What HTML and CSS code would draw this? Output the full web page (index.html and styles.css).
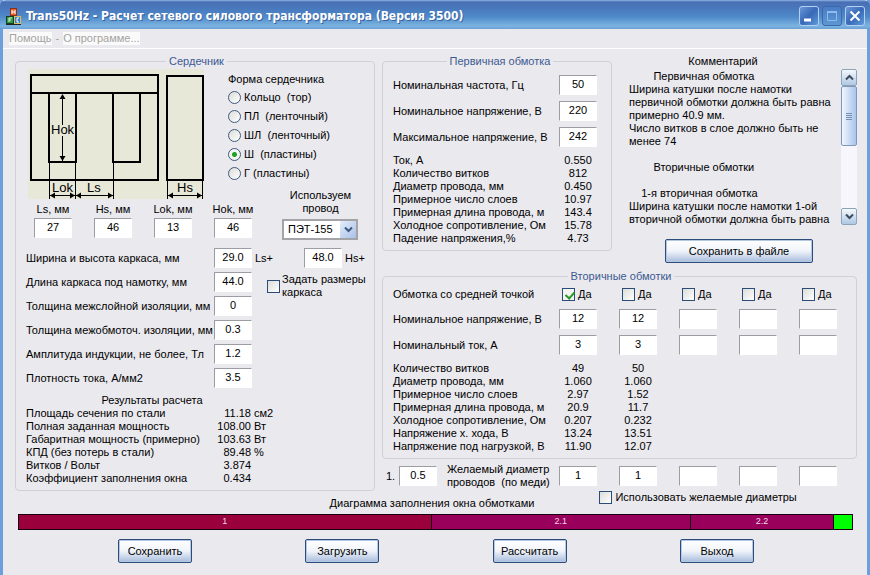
FILE: index.html
```html
<!DOCTYPE html>
<html lang="ru">
<head>
<meta charset="utf-8">
<title>Trans50Hz - Расчет сетевого силового трансформатора (Версия 3500)</title>
<link rel="stylesheet" href="styles.css">
</head>
<body>
<div class="window">
  <header class="titlebar">
    <svg class="app-icon" width="16" height="17" viewBox="0 0 16 17" aria-hidden="true">
      <rect x="4.500" y="0.500" width="6" height="7" fill="#e8602c" stroke="#8c3018"/>
      <path d="M6 2v4M9 2v4M6 4h3" stroke="#fff" fill="none"/>
      <rect x="0.500" y="8.500" width="7" height="7" fill="#2f9a4c" stroke="#14401f"/>
      <path d="M3 14v-4h3M3 12h2" stroke="#d8f5c8" fill="none"/>
      <rect x="8.500" y="8.500" width="6" height="7" fill="#3b7fd0" stroke="#d8c060"/>
      <path d="M13 10h-2v4h2" stroke="#fff" fill="none"/>
      <path d="M0 16.500h15" stroke="#222"/>
    </svg>
    <h1 class="title">Trans50Hz - Расчет сетевого силового трансформатора (Версия 3500)</h1>
    <div class="caption-buttons">
      <button type="button" class="cap" aria-label="Свернуть"><svg width="18" height="18" viewBox="0 0 18 18"><path d="M4 13h7" stroke="#fff" stroke-width="3"/></svg></button>
      <button type="button" class="cap cap-off" aria-label="Развернуть" disabled><svg width="18" height="18" viewBox="0 0 18 18"><path d="M4.500 5v8.500h9V5" fill="none" stroke="#8fbcec"/><path d="M4 5h10" stroke="#8fbcec" stroke-width="2"/></svg></button>
      <button type="button" class="cap" aria-label="Закрыть"><svg width="18" height="18" viewBox="0 0 18 18"><path d="M4.500 4.500l9 9M13.500 4.500l-9 9" stroke="#fff" stroke-width="2"/></svg></button>
    </div>
  </header>
  <nav class="menu"><a href="#help">Помощь</a><span class="dash">-</span><a href="#about">О программе...</a></nav>

  <main>
    <div class="columns">
      <fieldset class="core">
        <legend>Сердечник</legend>
        <div class="core-top">
          <svg class="drawing" width="176" height="130" viewBox="0 0 176 130" role="img" aria-label="Эскиз сердечника">
            <rect width="176" height="130" fill="#e8e8d8"/>
            <g fill="none" stroke="#000" stroke-width="2">
              <rect x="3" y="6" width="127" height="105"/>
              <path d="M3 24h127M21 24v69h27V24M85 24v69h27V24"/>
              <rect x="139" y="7" width="36" height="104"/>
            </g>
            <path d="M21.500 93v37M47.500 93v37M85.500 93v37M139.500 111v19M174.500 111v19M34.500 26v30M34.500 67v25M22 126.500h63M140 126.500h35" fill="none" stroke="#000"/>
            <path d="M34.500 25l3 5h-6zM34.500 92l3-5h-6zM22 126.500l5-3v6zM47 126.500l-5-3v6zM48 126.500l5-3v6zM85 126.500l-5-3v6zM140 126.500l5-3v6zM174 126.500l-5-3v6z"/>
            <text x="23" y="65">Hok</text><text x="24" y="123">Lok</text><text x="59" y="123">Ls</text><text x="149" y="123">Hs</text>
          </svg>
          <div class="shapes" role="radiogroup" aria-labelledby="shape-title">
            <div id="shape-title" class="shape-title">Форма сердечника</div>
            <label><input type="radio" name="shape">Кольцо&nbsp; (тор)</label>
            <label><input type="radio" name="shape">ПЛ&nbsp; (ленточный)</label>
            <label><input type="radio" name="shape">ШЛ&nbsp; (ленточный)</label>
            <label><input type="radio" name="shape" checked>Ш&nbsp; (пластины)</label>
            <label><input type="radio" name="shape">Г (пластины)</label>
          </div>
          <div class="dims">
            <label>Ls, мм<input type="text" value="27"></label>
            <label>Hs, мм<input type="text" value="46"></label>
            <label>Lok, мм<input type="text" value="13"></label>
            <label>Hok, мм<input type="text" value="46"></label>
          </div>
          <div class="wire">
            <label for="wire">Используем<br>провод</label>
            <div class="select">
              <select id="wire"><option>ПЭТ-155</option></select>
              <span class="drop"><svg width="9" height="7" viewBox="0 0 9 7"><path d="M1 1.500l3.500 3.500L8 1.500" fill="none" stroke="#3c5a80" stroke-width="2"/></svg></span>
            </div>
          </div>
        </div>
        <div class="params">
          <label for="fw">Ширина и высота каркаса, мм</label><input id="fw" type="text" value="29.0">
          <div class="frame-height"><span>Ls+</span><input id="fh" type="text" value="48.0"><label for="fh">Hs+</label></div>
          <label for="fl">Длина каркаса под намотку, мм</label><input id="fl" type="text" value="44.0">
          <label class="frame-check"><input type="checkbox"><span>Задать размеры<br>каркаса</span></label>
          <label for="il">Толщина межслойной изоляции, мм</label><input id="il" type="text" value="0">
          <label for="iw">Толщина межобмоточ. изоляции, мм</label><input id="iw" type="text" value="0.3">
          <label for="ia">Амплитуда индукции, не более, Тл</label><input id="ia" type="text" value="1.2">
          <label for="cd">Плотность тока, А/мм2</label><input id="cd" type="text" value="3.5">
        </div>
        <table class="results">
          <caption>Результаты расчета</caption>
          <tr><th>Площадь сечения по стали</th><td>11.18</td><td>см2</td></tr>
          <tr><th>Полная заданная мощность</th><td>108.00</td><td>Вт</td></tr>
          <tr><th>Габаритная мощность (примерно)</th><td>103.63</td><td>Вт</td></tr>
          <tr><th>КПД (без потерь в стали)</th><td>89.48</td><td>%</td></tr>
          <tr><th>Витков / Вольт</th><td>3.874</td><td></td></tr>
          <tr><th>Коэффициент заполнения окна</th><td>0.434</td><td></td></tr>
        </table>
      </fieldset>

      <div class="right">
        <div class="right-top">
          <fieldset class="primary">
            <legend>Первичная обмотка</legend>
            <table class="winding">
              <tr class="field"><th><label for="pf">Номинальная частота, Гц</label></th><td><input id="pf" type="text" value="50"></td></tr>
              <tr class="field"><th><label for="pn">Номинальное напряжение, В</label></th><td><input id="pn" type="text" value="220"></td></tr>
              <tr class="field"><th><label for="pm">Максимальное напряжение, В</label></th><td><input id="pm" type="text" value="242"></td></tr>
              <tr class="first"><th>Ток, А</th><td>0.550</td></tr>
              <tr><th>Количество витков</th><td>812</td></tr>
              <tr><th>Диаметр провода, мм</th><td>0.450</td></tr>
              <tr><th>Примерное число слоев</th><td>10.97</td></tr>
              <tr><th>Примерная длина провода, м</th><td>143.4</td></tr>
              <tr><th>Холодное сопротивление, Ом</th><td>15.78</td></tr>
              <tr><th>Падение напряжения,%</th><td>4.73</td></tr>
            </table>
          </fieldset>
          <section class="comment">
            <label for="comment">Комментарий</label>
            <div class="memo">
              <textarea id="comment" readonly wrap="off">        Первичная обмотка
Ширина катушки после намотки
первичной обмотки должна быть равна
примерно 40.9 мм.
Число витков в слое должно быть не
менее 74

        Вторичные обмотки

    1-я вторичная обмотка
Ширина катушки после намотки 1-ой
вторичной обмотки должна быть равна</textarea>
              <div class="scrollbar">
                <button type="button" aria-label="Вверх"><svg width="9" height="7" viewBox="0 0 9 7"><path d="M1 5.500L4.500 2 8 5.500" fill="none" stroke="#3c4c60" stroke-width="2"/></svg></button>
                <div class="track"><div class="thumb"></div></div>
                <button type="button" aria-label="Вниз"><svg width="9" height="7" viewBox="0 0 9 7"><path d="M1 1.500L4.500 5 8 1.500" fill="none" stroke="#3c4c60" stroke-width="2"/></svg></button>
              </div>
            </div>
            <button type="button" class="btn wide">Сохранить в файле</button>
          </section>
        </div>

        <fieldset class="secondary">
          <legend>Вторичные обмотки</legend>
          <table class="winding">
            <tr class="checks"><th>Обмотка со средней точкой</th>
              <td><label><input type="checkbox" checked>Да</label></td><td><label><input type="checkbox">Да</label></td><td><label><input type="checkbox">Да</label></td><td><label><input type="checkbox">Да</label></td><td><label><input type="checkbox">Да</label></td></tr>
            <tr class="field"><th id="sv">Номинальное напряжение, В</th>
              <td><input type="text" aria-labelledby="sv" value="12"></td><td><input type="text" aria-labelledby="sv" value="12"></td><td><input type="text" aria-labelledby="sv"></td><td><input type="text" aria-labelledby="sv"></td><td><input type="text" aria-labelledby="sv"></td></tr>
            <tr class="field"><th id="sc">Номинальный ток, А</th>
              <td><input type="text" aria-labelledby="sc" value="3"></td><td><input type="text" aria-labelledby="sc" value="3"></td><td><input type="text" aria-labelledby="sc"></td><td><input type="text" aria-labelledby="sc"></td><td><input type="text" aria-labelledby="sc"></td></tr>
            <tr class="first"><th>Количество витков</th><td>49</td><td>50</td><td></td><td></td><td></td></tr>
            <tr><th>Диаметр провода, мм</th><td>1.060</td><td>1.060</td><td></td><td></td><td></td></tr>
            <tr><th>Примерное число слоев</th><td>2.97</td><td>1.52</td><td></td><td></td><td></td></tr>
            <tr><th>Примерная длина провода, м</th><td>20.9</td><td>11.7</td><td></td><td></td><td></td></tr>
            <tr><th>Холодное сопротивление, Ом</th><td>0.207</td><td>0.232</td><td></td><td></td><td></td></tr>
            <tr><th>Напряжение х. хода, В</th><td>13.24</td><td>13.51</td><td></td><td></td><td></td></tr>
            <tr><th>Напряжение под нагрузкой, В</th><td>11.90</td><td>12.07</td><td></td><td></td><td></td></tr>
          </table>
        </fieldset>

        <div class="desired">
          <label for="d1">1.</label><input id="d1" type="text" value="0.5">
          <span id="dd" class="desired-title">Желаемый диаметр<br>проводов&nbsp; (по меди)</span>
          <input type="text" aria-labelledby="dd" value="1"><input type="text" aria-labelledby="dd" value="1"><input type="text" aria-labelledby="dd"><input type="text" aria-labelledby="dd"><input type="text" aria-labelledby="dd">
        </div>
      </div>
    </div>

    <div class="fill-head">
      <h2>Диаграмма заполнения окна обмотками</h2>
      <label><input type="checkbox">Использовать желаемые диаметры</label>
    </div>
    <div class="fill">
      <div class="seg one" style="flex-grow:414">1</div>
      <div class="seg two" style="flex-grow:260">2.1</div>
      <div class="seg two" style="flex-grow:143">2.2</div>
      <div class="seg free" style="flex-grow:18"></div>
    </div>
    <div class="actions">
      <button type="button" class="btn">Сохранить</button>
      <button type="button" class="btn">Загрузить</button>
      <button type="button" class="btn">Рассчитать</button>
      <button type="button" class="btn">Выход</button>
    </div>
  </main>
</div>
</body>
</html>
```
FILE: styles.css
```css
* { box-sizing: border-box; }

body {
  margin: 0;
  background: #eae9ee;
  color: #000;
  font: 11px/13px "Liberation Sans", Arial, sans-serif;
}
input, select, textarea, button { font: inherit; color: inherit; margin: 0; }

.window {
  min-height: 100vh;
  border: solid #6c9fdc;
  border-width: 0 3px;
  background: #eae9ee;
}

/* title bar */
.titlebar {
  display: flex;
  align-items: center;
  height: 29px;
  margin: 0 -3px;
  padding: 3px 5px 0 6px;
  gap: 4px;
  border-radius: 6px 6px 0 0;
  background: linear-gradient(#8fb4e4 0, #4a6fb4 2px, #4878bc 8px, #4f8aca 17px, #7db4e0 26px, #6a9fd4 29px);
}
.title {
  flex: 1;
  margin: 0;
  color: #fff;
  font: bold 12px/16px "DejaVu Sans Condensed", "DejaVu Sans", sans-serif;
  text-shadow: 1px 1px #3a62a0;
  white-space: nowrap;
}
.caption-buttons { display: flex; gap: 3px; }
.cap {
  width: 20px;
  height: 20px;
  padding: 0;
  border: 1px solid #b4d0f0;
  border-radius: 3px;
  background: linear-gradient(135deg, #6a98d8, #3868b8 50%, #5c9ad8);
}
.cap-off { border-color: #3c68ac; background: linear-gradient(#4a7cc4, #5c98d4); }
.cap svg { display: block; }

/* menu */
.menu {
  display: flex;
  align-items: center;
  height: 20px;
  padding: 0 6px;
  gap: 4px;
  border-bottom: 1px solid #fff;
}
.menu a { color: #a4a3a0; background: #fafafa; text-decoration: none; }
.dash { color: #a4a3a0; }

main { padding: 6px 10px 12px 12px; }

fieldset {
  min-width: 0;
  margin: 0;
  padding: 0 7px 5px 10px;
  border: 1px solid #d0d0d8;
  border-radius: 4px;
}
legend { margin: 0 auto; padding: 0 3px; color: #3c5a92; }

.columns {
  display: grid;
  grid-template-columns: 360fr 475fr;
  gap: 7px;
}

input[type=text] {
  width: 38px;
  height: 20px;
  padding: 0 1px 3px;
  border: 1px solid #fff;
  border-top-color: #9c9ca4;
  border-left-color: #9c9ca4;
  background: #fff;
  text-align: center;
}
input[type=checkbox], input[type=radio] {
  appearance: none;
  flex: none;
  width: 13px;
  height: 13px;
  border: 1px solid #2c4c78;
  background: linear-gradient(135deg, #dcdcd8, #fff);
}
input[type=radio] { border-radius: 50%; border-color: #3c5c80; }
input[type=radio]:checked { background: radial-gradient(#20a020 0 2px, #f4f6f4 3px); }
input[type=checkbox]:checked {
  background: #f4f4f2;
}
input[type=checkbox]:checked::before {
  content: "";
  display: block;
  width: 4px;
  height: 7px;
  margin: 1px 0 0 4px;
  border: solid #28982c;
  border-width: 0 2px 2px 0;
  transform: rotate(42deg);
}

/* core panel */
.core-top {
  display: grid;
  grid-template-columns: 188px 52px 1fr;
  grid-template-rows: 121px 14px 38px;
}
.drawing { grid-area: 1 / 1 / 3 / 2; margin: 1px 0 0 2px; }
.drawing text { font-size: 13px; }
.shapes { grid-area: 1 / 2 / 2 / 4; padding: 5px 0 0 14px; }
.shape-title { padding-bottom: 2px; }
.shapes label { display: flex; align-items: center; gap: 3px; height: 19px; }
.dims {
  grid-area: 3 / 1 / 4 / 3;
  display: grid;
  grid-template-columns: repeat(4, 60px);
  margin-left: -3px;
}
.dims label { display: flex; flex-direction: column; align-items: center; gap: 2px; }
.wire { grid-area: 2 / 3 / 4 / 4; text-align: center; padding: 0 8px 0 16px; }
.select {
  position: relative;
  width: 76px;
  height: 21px;
  margin-top: 4px;
  border: 2px solid #a4a4a8;
  background: #fff;
}
.select select {
  appearance: none;
  width: 100%;
  height: 17px;
  padding: 0 18px 0 4px;
  border: 0;
  background: none;
}
.drop {
  position: absolute;
  top: 0;
  right: 0;
  display: grid;
  place-items: center;
  width: 16px;
  height: 17px;
  background: linear-gradient(135deg, #e4eefc, #a8c0e8);
  pointer-events: none;
}

.params {
  display: grid;
  grid-template-columns: 188px 38px 1fr;
  grid-auto-rows: 24px;
  align-items: center;
  margin-top: 5px;
  white-space: nowrap;
}
.params > label { grid-column-start: 1; }
.frame-height { display: flex; align-items: center; gap: 3px; }
.frame-height span { width: 49px; padding-left: 3px; }
.params > label.frame-check {
  grid-area: 2 / 3 / 4 / 4;
  align-self: start;
  display: flex;
  align-items: center;
  gap: 2px;
  padding: 3px 0 0 15px;
}

table { border-spacing: 0; }
th, td { padding: 0; font-weight: normal; height: 13px; }
th { text-align: left; white-space: nowrap; }
.results { table-layout: fixed; width: 270px; margin-top: 4px; }
.results th { width: 188px; }
.results td { width: 37px; text-align: right; }
.results td:last-child { width: 45px; padding-left: 3px; text-align: left; }
.results caption { padding-right: 18px; }

/* windings */
.right { display: flex; flex-direction: column; gap: 7px; }
.right-top { display: grid; grid-template-columns: 230fr 245fr; align-items: start; }
.winding { table-layout: fixed; width: 100%; }
.winding th { width: 155px; }
.winding td { width: 60px; text-align: center; }
.winding .field > * { height: 26px; }
.winding .field input { display: block; margin: 0 auto; }
.winding .first > * { height: 17px; padding-top: 4px; }
.primary { padding: 4px 4px 5px 10px; }
.winding .checks > * { height: 23px; }
.checks label { display: flex; align-items: center; gap: 3px; padding-left: 14px; }
.secondary .winding { width: 455px; }

.comment { display: flex; flex-direction: column; padding-left: 17px; }
.comment > label { text-align: center; padding-right: 40px; }
.memo { display: flex; height: 156px; margin-top: 1px; }
.memo textarea {
  flex: 1;
  min-width: 0;
  padding: 1px 0;
  border: 0;
  background: none;
  overflow: hidden;
  resize: none;
}
.scrollbar { display: flex; flex-direction: column; width: 16px; background: #f6f6fc; }
.scrollbar button {
  height: 17px;
  padding: 0;
  border: 1px solid #8ca4b8;
  border-radius: 2px;
  background: linear-gradient(#f4f8fc, #b0c8e4);
}
.scrollbar svg { display: block; margin: auto; }
.track { flex: 1; }
.thumb {
  height: 60px;
  padding: 26px 4px;
  border: 1px solid #8098b4;
  border-radius: 2px;
  background:
    repeating-linear-gradient(#7890b0 0 1px, transparent 1px 2px) center / 6px 7px no-repeat,
    linear-gradient(90deg, #f0f6fe, #a8c4ec);
}

.btn {
  width: 74px;
  height: 24px;
  padding: 0;
  border: 1px solid #2c4c7c;
  border-radius: 2px;
  background: linear-gradient(#fff, #f0f4fa 50%, #a8bcdc);
  box-shadow: inset 0 0 0 1px #b4c8e4;
}
.btn.wide { width: 148px; align-self: center; margin: 14px 8px 0 0; }

.desired { display: flex; align-items: center; height: 26px; padding-left: 4px; margin-top: -3px; }
.desired > label { width: 13px; }
.desired-title { width: 122px; padding-left: 10px; white-space: nowrap; }
.desired-title ~ input + input { margin-left: 22px; }

/* window fill diagram */
.fill-head {
  display: grid;
  grid-template-columns: 1fr auto 1fr;
  align-items: start;
}
.fill-head h2 { grid-column: 2; margin: 6px 8px 0 0; font-size: 11px; font-weight: normal; }
.fill-head label { display: flex; align-items: center; gap: 3px; padding-left: 57px; }
.fill { display: flex; height: 16px; margin: 4px 4px 0 3px; border: 1px solid #180010; }
.seg { flex: 1 1 0; color: #f0d8e8; font-size: 9px; text-align: center; }
.seg + .seg { border-left: 1px solid #180010; }
.one { background: #99003c; }
.two { background: #99005c; }
.free { background: #00ff00; }
.actions { display: flex; justify-content: space-between; margin: 9px 103px 0; }
```
